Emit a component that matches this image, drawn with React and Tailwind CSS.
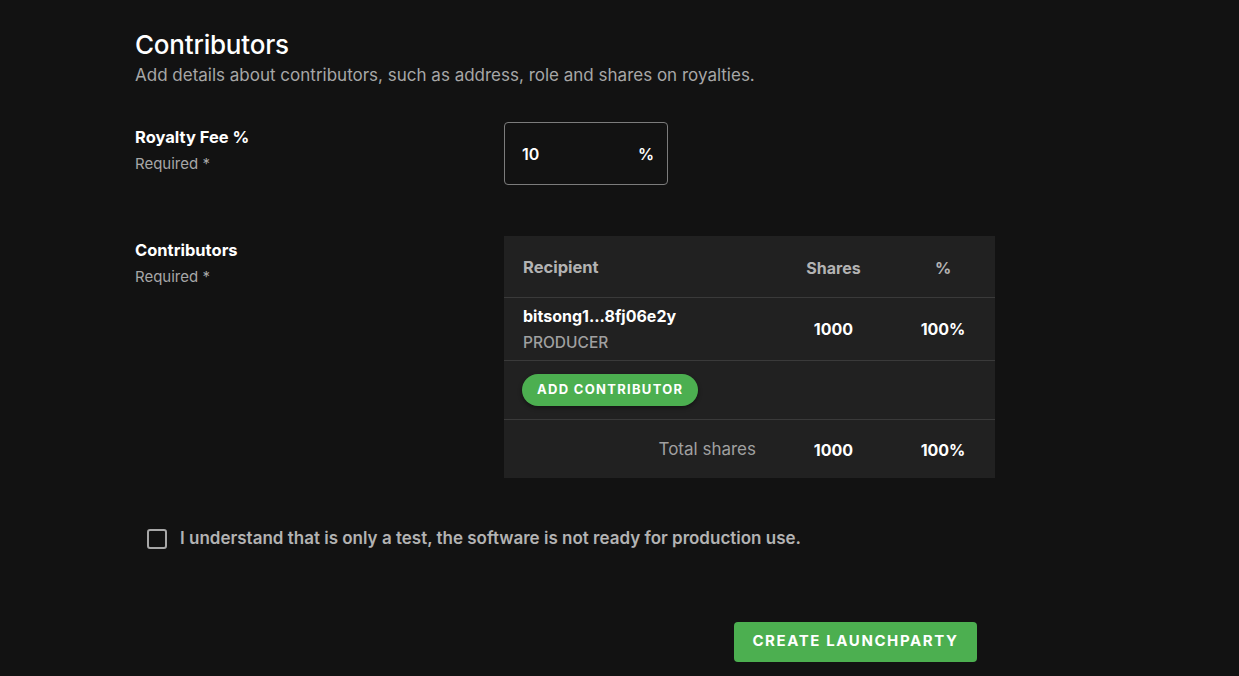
import { useState } from 'react'

function FieldLabel({ title, className = '' }) {
  return (
    <div className={`w-[369px] shrink-0 ${className}`}>
      <div className="text-[16.5px] leading-6 font-bold text-white">{title}</div>
      <div className="mt-[3px] text-[15px] leading-6 text-[#a7a7a7]">Required *</div>
    </div>
  )
}

export default function App() {
  const [checked, setChecked] = useState(false)

  return (
    <div
      className="min-h-[676px] bg-[#121212] pl-[135px] pt-[29px] text-white"
      style={{ fontFamily: 'Inter, "Liberation Sans", sans-serif' }}
    >
      <h1 className="text-[26px] leading-8 font-medium tracking-[-0.2px]">Contributors</h1>
      <p className="mt-[2px] text-[17px] leading-6 text-[#a7a7a7]">
        Add details about contributors, such as address, role and shares on royalties.
      </p>

      <div className="mt-[35px] flex">
        <FieldLabel title="Royalty Fee %" className="pt-[3px]" />
        <div className="flex h-[63px] w-[164px] items-center justify-between rounded border border-[#7c7c7c] pl-[17px] pr-[13px]">
          <span className="text-[16px] font-semibold">10</span>
          <span className="text-[16px] font-semibold">%</span>
        </div>
      </div>

      <div className="mt-[51px] flex">
        <FieldLabel title="Contributors" className="pt-[2px]" />
        <div className="w-[491px] bg-[#212121] text-[16px]">
          <div className="flex h-[62px] items-center border-b border-[#3a3a3a] pt-[2px] font-bold text-[#b3b3b3]">
            <div className="flex-1 pl-[19px] text-[16.5px]">Recipient</div>
            <div className="w-[115px] text-center">Shares</div>
            <div className="w-[104px] text-center">%</div>
          </div>
          <div className="flex h-[63px] items-center border-b border-[#3a3a3a] font-bold">
            <div className="flex-1 pl-[19px]">
              <div className="-mt-[1px] leading-6 text-white">bitsong1...8fj06e2y</div>
              <div className="mt-[5px] text-[15.5px] leading-5 font-medium text-[#a0a0a0]">PRODUCER</div>
            </div>
            <div className="w-[115px] text-center">1000</div>
            <div className="w-[104px] text-center">100%</div>
          </div>
          <div className="flex h-[59px] items-center border-b border-[#3a3a3a] pl-[18px]">
            <button className="h-[32px] rounded-full bg-[#4caf50] px-[15px] text-[13px] font-bold tracking-[1.3px] text-white shadow-[0_2px_4px_rgba(0,0,0,0.4)]">
              ADD CONTRIBUTOR
            </button>
          </div>
          <div className="flex h-[58px] items-center pt-[2px] font-bold">
            <div className="flex-1 pr-[20px] text-right text-[17px] font-normal text-[#a0a0a0]">Total shares</div>
            <div className="w-[115px] text-center">1000</div>
            <div className="w-[104px] text-center">100%</div>
          </div>
        </div>
      </div>

      <label className="ml-[12px] mt-[48px] flex cursor-pointer items-center gap-[13px]">
        <span
          onClick={() => setChecked(!checked)}
          className="flex h-[20px] w-[20px] items-center justify-center rounded-[3px] border-2 border-[#a7a7a7]"
        >
          {checked && <span className="h-[10px] w-[10px] bg-[#a7a7a7]" />}
        </span>
        <span className="text-[17px] font-semibold text-[#b3b3b3]">
          I understand that is only a test, the software is not ready for production use.
        </span>
      </label>

      <div className="mt-[70px] flex pl-[599px]">
        <button className="h-[40px] w-[243px] rounded bg-[#4caf50] text-[15px] font-bold tracking-[1.6px] text-white">
          CREATE LAUNCHPARTY
        </button>
      </div>
    </div>
  )
}
